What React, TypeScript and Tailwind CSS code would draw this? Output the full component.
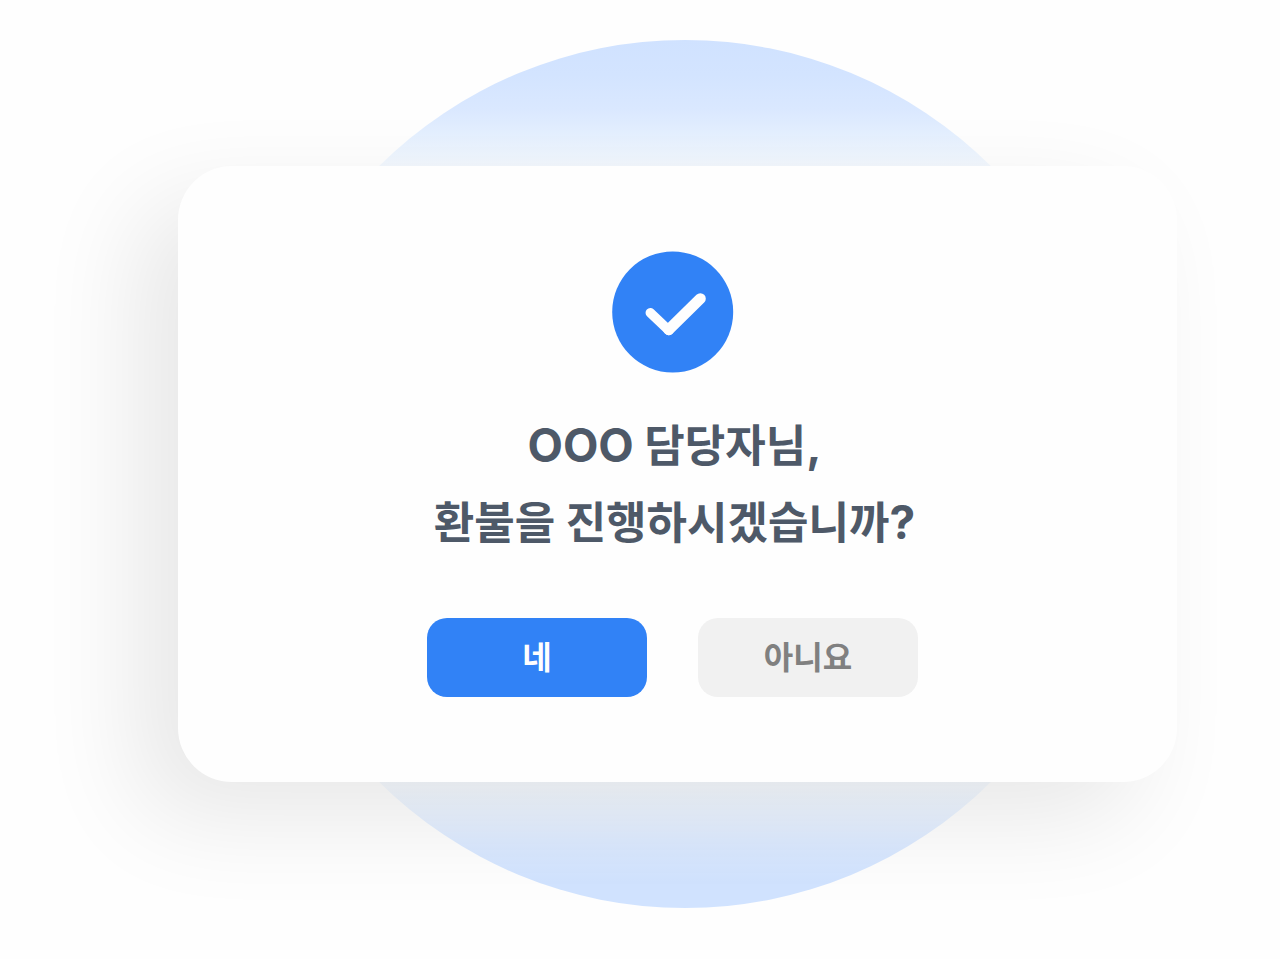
import React from "react";

function CheckBadge() {
  return (
    <svg viewBox="0 0 122 122" className="size-[122px] shrink-0" aria-hidden="true">
      <circle cx="60.7" cy="61" r="60.5" fill="#3182f6" />
      <path
        d="M38.3 61.8L57 79.5"
        fill="none"
        stroke="#fefefe"
        strokeWidth="9.5"
        strokeLinecap="round"
      />
      <path
        d="M56.8 78.7L88.3 47.7"
        fill="none"
        stroke="#fefefe"
        strokeWidth="11"
        strokeLinecap="round"
      />
    </svg>
  );
}

export default function App() {
  return (
    <main className="flex min-h-screen items-start overflow-hidden bg-[#fefefe] pt-[166px] pr-[103px] pb-[176px] pl-[178px] font-['Inter','Noto_Sans_CJK_KR',sans-serif]">
      <div className="relative w-full">
        <div
          aria-hidden="true"
          className="absolute top-1/2 left-1/2 ml-[7px] size-[868px] -translate-x-1/2 -translate-y-1/2 rounded-full bg-[linear-gradient(#d0e2ff_0%,#d3e4ff_4%,#dae8ff_8%,#e5f0ff_11%,#f3f8fe_14.5%,#f8fafe_84%,#f5f9fe_86%,#eaf3ff_89%,#dbe9ff_93%,#d1e3ff_97%)]"
        />
        <section
          role="dialog"
          aria-labelledby="refund-title"
          className="relative flex flex-col items-center rounded-[54px] bg-[#fefefe] px-8 pt-[85px] pr-[42px] pb-[85px] shadow-[-42px_36px_100px_rgba(0,0,0,0.09)]"
        >
          <CheckBadge />
          <h1
            id="refund-title"
            className="mt-[34px] pl-1 text-center text-[44px] leading-[76px] font-bold text-[#4e5968]"
          >
            <span className="text-[46px]">OOO</span> 담당자님<span className="text-[46px]">,</span>
            <br />
            환불을 진행하시겠습니까<span className="text-[46px]">?</span>
          </h1>
          <div className="mt-[57px] flex flex-wrap justify-center gap-[51px] text-[32px] leading-[47px]">
            <button
              type="button"
              className="w-[220px] rounded-[20px] bg-[#3182f6] py-4 font-bold text-[#fefefe]"
            >
              네
            </button>
            <button
              type="button"
              className="w-[220px] rounded-[20px] bg-[#f1f1f1] py-4 font-bold text-[#808080]"
            >
              아니요
            </button>
          </div>
        </section>
      </div>
    </main>
  );
}
